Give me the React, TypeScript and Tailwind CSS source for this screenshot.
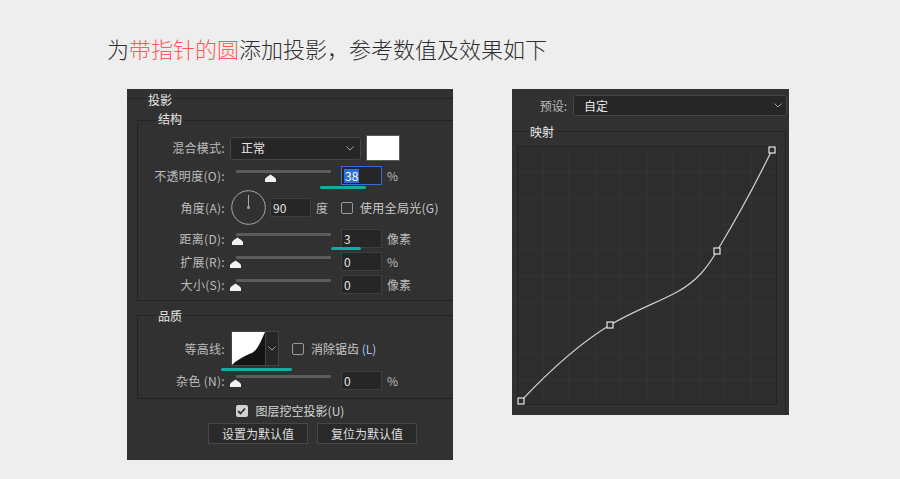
import React from "react";

const FONT = "font-['Noto_Sans_CJK_SC',sans-serif]";

function Chevron() {
  return (
    <svg width="8" height="5" viewBox="0 0 8 5">
      <path d="M0.5 0.5 L4 4 L7.5 0.5" fill="none" stroke="#a0a0a0" strokeWidth="1" />
    </svg>
  );
}

function Thumb() {
  return (
    <svg width="11" height="8" viewBox="0 0 11 8">
      <path d="M5.5 0.5 C7 1.5 10 3.5 11 5 L11 8 L0 8 L0 5 C1 3.5 4 1.5 5.5 0.5 Z" fill="#f2f2f2" />
    </svg>
  );
}

function Slider({ at }: { at: number }) {
  return (
    <div className="relative w-[111px] h-full shrink-0">
      <div className="absolute left-[6px] top-[4px] w-[95px] h-[3px] bg-[#5c5c5c] rounded-[1px]" />
      <div className="absolute top-[8px] flex" style={{ left: at }}>
        <Thumb />
      </div>
    </div>
  );
}

function Field({ v, active }: { v: string; active?: boolean }) {
  return (
    <div
      className={
        "w-[41px] h-[19px] shrink-0 flex items-center pl-[2px] text-[12px] leading-none text-[#e2e2e2] bg-[#262626] border " +
        (active ? "border-[#2f6fd6]" : "border-[#3e3e3e]")
      }
    >
      {active ? <span className="bg-[#2d6fd9] text-white px-[1px] py-[1px]">{v}</span> : v}
    </div>
  );
}

function Label({ children }: { children: React.ReactNode }) {
  return <div className="w-[87px] shrink-0 text-right text-[12px] leading-none tracking-[0.3px] text-[#bcbcbc]">{children}</div>;
}

function Legend({ children, className }: { children: React.ReactNode; className: string }) {
  return (
    <span className={"absolute px-[2px] bg-[#313131] text-[12px] leading-[16px] text-[#e8e8e8] " + className}>{children}</span>
  );
}

function Check({ on }: { on?: boolean }) {
  return on ? (
    <div className="w-[12px] h-[12px] shrink-0 rounded-[2px] bg-[#d2d2d2] flex items-center justify-center">
      <svg width="9" height="8" viewBox="0 0 9 8">
        <path d="M1 4 L3.5 6.5 L8 1.5" fill="none" stroke="#333" strokeWidth="1.8" />
      </svg>
    </div>
  ) : (
    <div className="w-[12px] h-[12px] shrink-0 rounded-[2px] border border-[#9a9a9a]" />
  );
}

function Mark({ className }: { className: string }) {
  return <div className={"absolute h-[3px] bg-[#16aaa4] rounded-full " + className} />;
}

function Curve() {
  const lines = Array.from({ length: 9 }, (_, i) => (i + 1) * 26);
  const pts: [number, number][] = [
    [4, 255],
    [93, 179],
    [200, 105],
    [255, 4],
  ];
  return (
    <svg width="260" height="259" viewBox="0 0 260 259" className="block">
      <rect x="0.5" y="0.5" width="259" height="258" fill="#2d2d2d" stroke="#242424" />
      {lines.map((p) => (
        <g key={p}>
          <line x1={p} y1="1" x2={p} y2="258" stroke="#343434" />
          <line x1="1" y1={p} x2="259" y2={p} stroke="#343434" />
        </g>
      ))}
      <path
        d="M4 255 C35 222 65 196 93 179 C120 163 140 157 160 146 C180 135 190 122 200 105 C220 72 240 35 255 4"
        fill="none"
        stroke="#cfcfcf"
        strokeWidth="1.2"
      />
      {pts.map(([x, y]) => (
        <rect key={x} x={x - 3} y={y - 3} width="6" height="6" fill="#2d2d2d" stroke="#e6e6e6" strokeWidth="1.2" />
      ))}
    </svg>
  );
}

function Contour() {
  return (
    <div className="ml-[6px] flex h-[35px] border border-[#444]">
      <svg width="33" height="33" viewBox="0 0 34 35" className="block bg-white" preserveAspectRatio="none">
        <rect width="34" height="35" fill="#fff" />
        <path d="M0 35 L1 34 C6 29 14 25 21 22 C26 19 29 12 34 0 L34 35 Z" fill="#141414" />
      </svg>
      <div className="w-[13px] h-full bg-[#262626] border-l border-[#444] flex items-center justify-center">
        <Chevron />
      </div>
    </div>
  );
}

function DropShadowPanel() {
  return (
    <div className="w-[326px] h-[371px] bg-[#313131] overflow-hidden pt-[9px] flex flex-col">
      <div className="relative border-t border-[#232323] pl-[10px] pt-[21px]">
        <Legend className="left-[19px] -top-[7px]">投影</Legend>

        <div className="relative w-[340px] h-[181px] border-l border-t border-b border-[#232323] pt-[14px] flex flex-col">
          <Legend className="left-[18px] -top-[10px]">结构</Legend>

          <div className="flex items-center h-[26px]">
            <Label>混合模式:</Label>
            <div className="ml-[5px] w-[131px] h-[23px] rounded-[3px] bg-[#262626] border border-[#454545] flex items-center justify-between pl-[10px] pr-[6px] text-[12px] text-[#e6e6e6]">
              正常
              <Chevron />
            </div>
            <div className="ml-[5px] w-[34px] h-[26px] bg-white border border-[#5a5a5a]" />
          </div>

          <div className="relative flex items-center h-[19px] mt-[5px]">
            <Label>不透明度(O):</Label>
            <div className="ml-[5px] h-full flex">
              <Slider at={35} />
            </div>
            <Field v="38" active />
            <span className="ml-[5px] text-[12px] text-[#bcbcbc]">%</span>
            <Mark className="left-[182px] top-[20px] w-[46px]" />
          </div>

          <div className="flex items-center h-[35px] mt-[5px]">
            <Label>角度(A):</Label>
            <svg width="35" height="35" viewBox="0 0 35 35" className="ml-[6px] shrink-0">
              <circle cx="17.5" cy="17.5" r="16.8" fill="none" stroke="#a8a8a8" strokeWidth="1" />
              <line x1="17.5" y1="17.5" x2="17.5" y2="5" stroke="#a8a8a8" strokeWidth="1" />
              <circle cx="17.5" cy="17.5" r="1.5" fill="#a8a8a8" />
            </svg>
            <div className="ml-[4px]">
              <Field v="90" />
            </div>
            <span className="ml-[5px] text-[12px] text-[#bcbcbc]">度</span>
            <div className="ml-[13px]">
              <Check />
            </div>
            <span className="ml-[7px] text-[12px] tracking-[0.3px] text-[#c8c8c8]">使用全局光(G)</span>
          </div>

          <div className="relative flex items-center h-[19px] mt-[4px]">
            <Label>距离(D):</Label>
            <div className="ml-[5px] h-full flex">
              <Slider at={2} />
            </div>
            <Field v="3" />
            <span className="ml-[5px] text-[12px] text-[#bcbcbc]">像素</span>
            <Mark className="left-[193px] top-[18px] w-[30px]" />
          </div>

          <div className="flex items-center h-[19px] mt-[4px]">
            <Label>扩展(R):</Label>
            <div className="ml-[5px] h-full flex">
              <Slider at={0} />
            </div>
            <Field v="0" />
            <span className="ml-[5px] text-[12px] text-[#bcbcbc]">%</span>
          </div>

          <div className="flex items-center h-[19px] mt-[4px]">
            <Label>大小(S):</Label>
            <div className="ml-[5px] h-full flex">
              <Slider at={0} />
            </div>
            <Field v="0" />
            <span className="ml-[5px] text-[12px] text-[#bcbcbc]">像素</span>
          </div>
        </div>

        <div className="relative mt-[14px] w-[340px] h-[84px] border-l border-t border-b border-[#232323] pt-[15px] flex flex-col">
          <Legend className="left-[18px] -top-[8px]">品质</Legend>

          <div className="relative flex items-center h-[35px]">
            <Label>等高线:</Label>
            <Contour />
            <div className="ml-[13px]">
              <Check />
            </div>
            <span className="ml-[7px] text-[12px] text-[#c8c8c8]">
              消除锯齿 <span className="text-[#a9c6ea]">(L)</span>
            </span>
            <Mark className="left-[83px] top-[37px] w-[71px]" />
          </div>

          <div className="flex items-center h-[19px] mt-[5px]">
            <Label>杂色 (N):</Label>
            <div className="ml-[5px] h-full flex">
              <Slider at={0} />
            </div>
            <Field v="0" />
            <span className="ml-[5px] text-[12px] text-[#bcbcbc]">%</span>
          </div>
        </div>
      </div>

      <div className="mt-[6px] h-[12px] flex items-center justify-center">
        <Check on />
        <span className="ml-[8px] text-[12px] leading-none text-[#d4d4d4]">图层挖空投影(U)</span>
      </div>

      <div className="mt-[6px] pl-[81px] flex gap-[9px]">
        <button className="w-[100px] h-[21px] bg-[#2a2a2a] border border-[#474747] text-[12px] leading-none text-[#dedede]">
          设置为默认值
        </button>
        <button className="w-[100px] h-[21px] bg-[#2a2a2a] border border-[#474747] text-[12px] leading-none text-[#dedede]">
          复位为默认值
        </button>
      </div>
    </div>
  );
}

function MappingPanel() {
  return (
    <div className="w-[277px] h-[326px] bg-[#313131] overflow-hidden pt-[6px] flex flex-col">
      <div className="flex items-center h-[21px]">
        <div className="w-[55px] text-right text-[12px] leading-none text-[#bcbcbc]">预设:</div>
        <div className="ml-[6px] w-[214px] h-[21px] rounded-[3px] bg-[#262626] border border-[#454545] flex items-center justify-between pl-[10px] pr-[4px] text-[12px] text-[#e6e6e6]">
          自定
          <Chevron />
        </div>
      </div>
      <div className="relative mt-[15px] w-[274px] h-[290px] border-t border-r border-[#232323] pt-[14px] pl-[5px]">
        <Legend className="left-[16px] -top-[8px]">映射</Legend>
        <Curve />
      </div>
    </div>
  );
}

export default function App() {
  return (
    <div className={"w-[900px] h-[479px] bg-[#eeeeee] overflow-hidden " + FONT}>
      <h1 className="pt-[33px] pl-[107px] h-[63px] text-[22px] leading-[30px] font-light text-[#2e2e2e]">
        为<span className="text-[#ff5a5a]">带指针的圆</span>添加投影，参考数值及效果如下
      </h1>
      <div className="mt-[26px] pl-[127px] flex items-start gap-[59px]">
        <DropShadowPanel />
        <MappingPanel />
      </div>
    </div>
  );
}
